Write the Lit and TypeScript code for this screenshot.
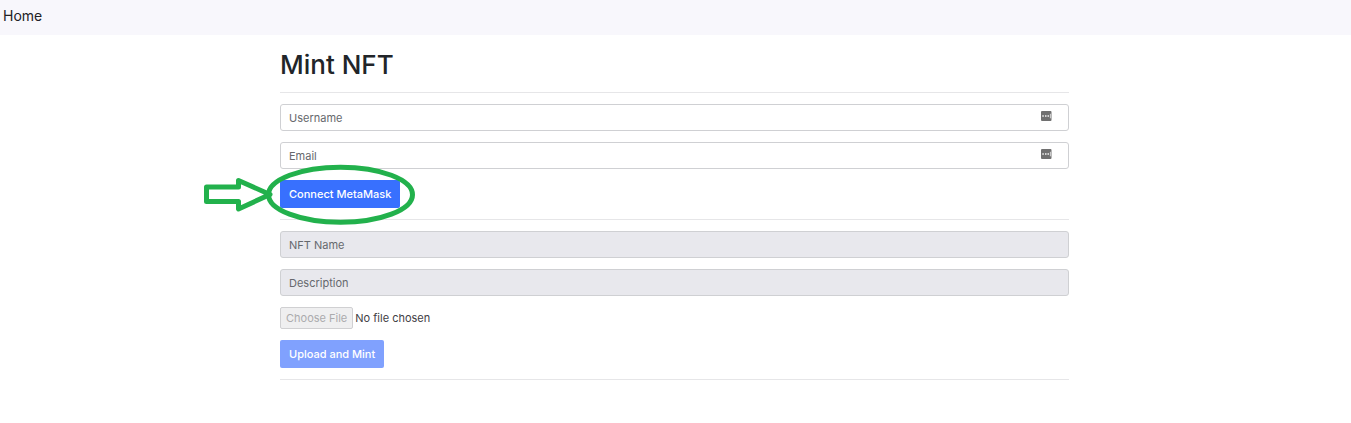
import { LitElement, html, css, svg } from "lit";
import { customElement, property } from "lit/decorators.js";

@customElement("text-field")
class TextField extends LitElement {
  @property() label = "";
  @property() type = "text";
  @property({ type: Boolean }) disabled = false;
  @property({ type: Boolean }) autofill = false;

  static styles = css`
    :host {
      display: block;
    }
    .field {
      display: grid;
      align-items: center;
    }
    .input {
      grid-area: 1 / 1;
      box-sizing: border-box;
      width: 100%;
      height: 27px;
      margin: 0;
      padding: 1px 8px 0;
      border: 1px solid #cfd0d3;
      border-radius: 3px;
      background: #fff;
      color: #212529;
      font: 400 11px/18px Inter, "Liberation Sans", sans-serif;
    }
    .input::placeholder {
      color: #66686d;
      opacity: 1;
    }
    .input:disabled {
      background: #e8e8ed;
    }
    .key {
      grid-area: 1 / 1;
      justify-self: end;
      margin: 0 17px 3px 0;
      z-index: 1;
    }
  `;

  render() {
    return html`<div class="field">
      <input
        class="input"
        type=${this.type}
        placeholder=${this.label}
        aria-label=${this.label}
        ?disabled=${this.disabled}
      />
      ${this.autofill
        ? html`<svg class="key" width="11" height="10" viewBox="0 0 11 10" aria-hidden="true">
            <rect width="10.5" height="10" rx="1" fill="#707070" />
            <path d="M1.3 5h1.5M4 5h1.5M6.5 5H8" stroke="#f4f4f4" stroke-width="1.3" />
            <path d="M9.4 2.8v4.5" stroke="#d5d5d5" stroke-width="1" />
          </svg>`
        : null}
    </div>`;
  }
}

@customElement("app-root")
class AppRoot extends LitElement {
  static styles = css`
    :host {
      display: block;
      color: #212529;
      background: #fff;
      font: 400 11px/18px Inter, "Liberation Sans", sans-serif;
    }
    .nav {
      display: flex;
      align-items: center;
      padding: 5px 3px 9px;
      background: #f8f7fc;
    }
    .link {
      color: #212125;
      font-size: 14px;
      line-height: 21px;
      text-decoration: none;
    }
    .page {
      padding: 12px 18px 16px 16px;
    }
    .content {
      max-width: 789px;
      margin: 0 auto;
    }
    .title {
      margin: 0;
      padding: 1px 0 10px;
      font-size: 26px;
      line-height: 34px;
      font-weight: 500;
    }
    .rule {
      height: 1px;
      margin: 0;
      border: 0;
      background: #e6e6e8;
    }
    .group {
      display: flex;
      flex-direction: column;
      align-items: stretch;
      gap: 11px;
      padding: 11px 0;
    }
    .action {
      position: relative;
      align-self: flex-start;
    }
    .button {
      display: block;
      height: 28px;
      margin: 0;
      padding: 0 9px;
      border: 0;
      border-radius: 2px;
      background: #3870fe;
      color: #fff;
      font: 500 11px/18px Inter, "Liberation Sans", sans-serif;
      white-space: nowrap;
    }
    .button:disabled {
      background: #80a1fe;
    }
    .highlight {
      position: absolute;
      left: -80px;
      top: -20px;
      pointer-events: none;
    }
    .file {
      align-self: flex-start;
      height: 22px;
      color: #3f4045;
      font: 400 11px/22px Inter, "Liberation Sans", sans-serif;
    }
    .file::file-selector-button {
      box-sizing: border-box;
      height: 22px;
      margin: 0 2px 0 0;
      padding: 0 5px;
      border: 1px solid #d0d0d2;
      border-radius: 2px;
      background: #efeff0;
      color: #ababad;
      font: 400 11px/18px Inter, "Liberation Sans", sans-serif;
    }
  `;

  private highlight() {
    return svg`<svg class="highlight" width="220" height="70" viewBox="0 0 220 70"
      fill="none" stroke="#22b14c" stroke-width="5" aria-hidden="true">
      <ellipse cx="140.5" cy="34.7" rx="72" ry="27.5" />
      <path d="M6.500 27H38.500V20.500L70 34.500L38.500 49V41.500H6.500Z" stroke-linejoin="round" />
    </svg>`;
  }

  render() {
    return html`
      <nav class="nav"><a class="link" href="#">Home</a></nav>
      <main class="page">
        <div class="content">
          <h1 class="title">Mint NFT</h1>
          <hr class="rule" />
          <div class="group">
            <text-field label="Username" autofill></text-field>
            <text-field label="Email" type="email" autofill></text-field>
            <div class="action">
              <button class="button" type="button">Connect MetaMask</button>
              ${this.highlight()}
            </div>
          </div>
          <hr class="rule" />
          <div class="group">
            <text-field label="NFT Name" disabled></text-field>
            <text-field label="Description" disabled></text-field>
            <input class="file" type="file" aria-label="NFT file" disabled />
            <div class="action">
              <button class="button" type="button" disabled>Upload and Mint</button>
            </div>
          </div>
          <hr class="rule" />
        </div>
      </main>
    `;
  }
}
